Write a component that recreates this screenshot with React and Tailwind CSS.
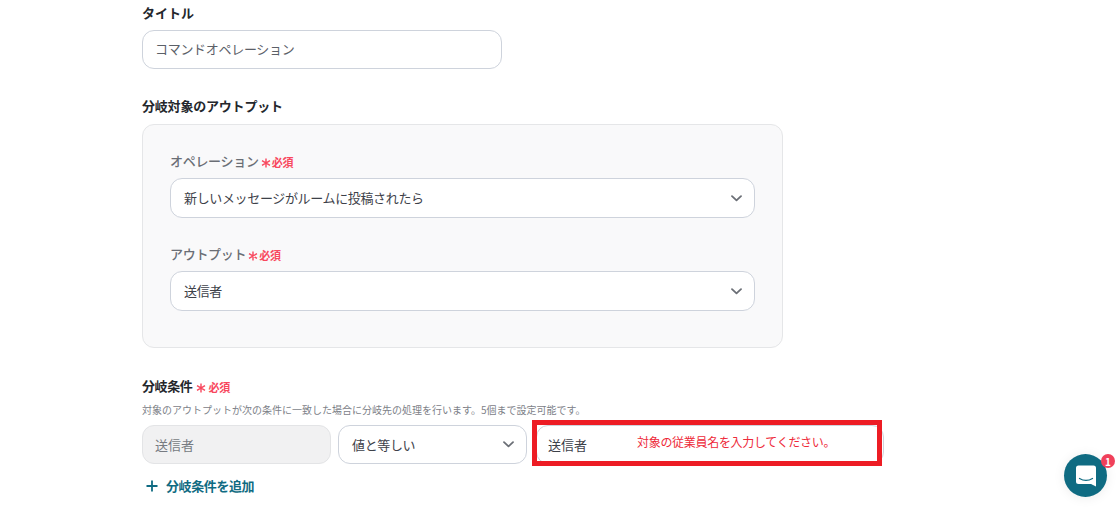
import React from "react";

const font = { fontFamily: '"Noto Sans CJK JP", "Noto Sans", sans-serif' };

function Chevron() {
  return (
    <svg width="11" height="7" viewBox="0 0 11 7" fill="none" className="shrink-0">
      <path d="M1 1.2 5.5 5.4 10 1.2" stroke="#6b6f76" strokeWidth="1.8" strokeLinecap="round" strokeLinejoin="round" />
    </svg>
  );
}

function Required({ className = "", textClass = "ml-[1px]" }) {
  return (
    <span className={`inline-flex items-center pt-[1px] text-[11px] font-bold tracking-[-0.2px] text-[#f8485e] ${className}`}>
      <svg width="10" height="10" viewBox="0 0 10 10" className="mt-[3px]">
        <path d="M5 .5v9M1 2.7l8 4.6M9 2.7 1 7.3" stroke="#f8485e" strokeWidth="1.4" />
      </svg>
      <span className={textClass}>必須</span>
    </span>
  );
}

function Select({ children, className = "" }) {
  return (
    <div className={`flex items-center justify-between rounded-xl border border-[#ced3dc] bg-white pl-[13px] pr-[12px] text-[13px] tracking-[-0.35px] text-[#3d4149] ${className}`}>
      <span>{children}</span>
      <Chevron />
    </div>
  );
}

export default function App() {
  return (
    <div style={font} className="relative h-[511px] w-[1118px] overflow-hidden bg-white pl-[142px] text-[#24272c]">
      <div className="flex h-[26px] items-end pb-[4px] text-[13px] font-bold">タイトル</div>
      <div className="mt-[4px] flex h-[39px] w-[360px] items-center rounded-xl border border-[#ced3dc] bg-white pb-[2px] pl-[12px] text-[13px] tracking-[-0.3px] text-[#5b6068]">
        コマンドオペレーション
      </div>

      <div className="mt-[27px] h-[20px] text-[13px] font-bold leading-[20px] tracking-[-0.2px]">分岐対象のアウトプット</div>
      <div className="mt-[8px] h-[224px] w-[641px] rounded-xl border border-[#e5e6e8] bg-[#f9f9fa] pl-[27px] pr-[27px] pt-[26px]">
        <div className="flex h-[20px] items-center text-[13px] font-medium leading-[20px] tracking-[-0.3px] text-[#6a6e75]">
          オペレーション
          <Required className="ml-[2px]" />
        </div>
        <Select className="mt-[7px] h-[40px]">新しいメッセージがルームに投稿されたら</Select>
        <div className="mt-[26px] flex h-[20px] items-center text-[13px] font-medium leading-[20px] tracking-[-0.3px] text-[#6a6e75]">
          アウトプット
          <Required className="ml-[2px]" />
        </div>
        <Select className="mt-[7px] h-[40px]">送信者</Select>
      </div>

      <div className="mt-[28px] flex h-[20px] items-center text-[13px] font-bold leading-[20px] tracking-[-0.4px]">
        分岐条件
        <Required className="ml-[4px]" textClass="ml-[2px]" />
      </div>
      <div className="mt-[7px] h-[14px] text-[10px] leading-[14px] text-[#7d8188]">
        対象のアウトプットが次の条件に一致した場合に分岐先の処理を行います。5個まで設定可能です。
      </div>
      <div className="mt-[8px] flex gap-[7px]">
        <div className="flex h-[39px] w-[189px] items-center rounded-xl border border-[#e3e4e6] bg-[#f1f1f2] pl-[12px] text-[13px] text-[#777b82]">
          送信者
        </div>
        <Select className="h-[39px] w-[189px]">値と等しい</Select>
        <div className="relative ml-[2px] flex h-[39px] w-[348px] items-center rounded-xl border border-[#ced3dc] bg-white pl-[11px] text-[13px] text-[#3d4149]">
          送信者
          <div className="absolute -left-[5px] -top-[6px] h-[46px] w-[350px] border-[5px] border-[#ed1c24]" />
          <span className="absolute left-[100px] top-[7px] text-[12px] leading-[18px] tracking-[-0.3px] text-[#ee2a3a]">
            対象の従業員名を入力してください。
          </span>
        </div>
      </div>
      <div className="mt-[11px] flex h-[22px] items-center pl-[3px] text-[13px] font-bold tracking-[-0.4px] text-[#0f6b82]">
        <svg width="14" height="14" viewBox="0 0 14 14" className="mr-[7px]">
          <path d="M7 1.5v11M1.5 7h11" stroke="#0f6b82" strokeWidth="1.8" />
        </svg>
        分岐条件を追加
      </div>

      <div className="absolute left-[1064px] top-[454px] flex h-[43px] w-[43px] items-center justify-center rounded-full bg-[#0f6b82] shadow-[0_1px_12px_rgba(0,0,0,0.08)]">
        <svg width="22" height="24" viewBox="0 0 22 24">
          <path d="M3.5 1.5h15a2.5 2.5 0 0 1 2.5 2.5v18.5l-5-2.5H3.5A2.5 2.5 0 0 1 1 17.5V4a2.5 2.5 0 0 1 2.5-2.5Z" fill="#fff" />
          <path d="M4.5 14.5c4 2.4 9 2.4 13 0" fill="none" stroke="#0f6b82" strokeWidth="1.3" strokeLinecap="round" />
        </svg>
      </div>
      <div className="absolute left-[1101px] top-[454px] flex h-[14px] w-[14px] items-center justify-center rounded-full bg-[#f0405a] text-[10px] font-bold text-white">
        1
      </div>
    </div>
  );
}
